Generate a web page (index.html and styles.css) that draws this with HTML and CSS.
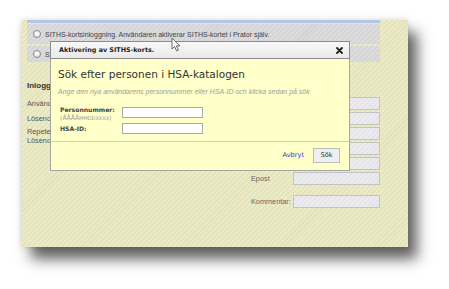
FILE: index.html
```html
<!DOCTYPE html>
<html lang="sv">
<head>
    <meta charset="UTF-8">
    <title>Aktivering av SITHS-korts</title>
    <link rel="stylesheet" href="styles.css">
</head>
<body>
  <div class="frame">
    <div class="shot">
        <div class="top-strip"></div>
        <div class="choice choice--first">
            <span class="radio"></span>
            <span>SITHS-kortsinloggning. Användaren aktiverar SITHS-kortet i Prator själv.</span>
        </div>
        <div class="choice choice--second">
            <span class="radio"></span>
            <span class="choice__cut">SITHS-kort med engångskod</span>
        </div>

        <h2 class="form-title">Inloggning</h2>
        <div class="form">
            <div class="form__left">
                <p class="form__label">Användarnamn</p>
                <p class="form__label">Lösenord</p>
                <p class="form__label form__label--two">Repetera<br>Lösenord</p>
            </div>
            <div class="form__right">
                <div class="field"><span class="field__label"></span><span class="field__input"></span></div>
                <div class="field"><span class="field__label"></span><span class="field__input"></span></div>
                <div class="field"><span class="field__label"></span><span class="field__input"></span></div>
                <div class="field"><span class="field__label"></span><span class="field__input"></span></div>
                <div class="field"><span class="field__label"></span><span class="field__input"></span></div>
                <div class="field"><span class="field__label">Epost</span><span class="field__input"></span></div>
                <div class="field field--gap"><span class="field__label">Kommentar:</span><span class="field__input"></span></div>
            </div>
        </div>

        <!-- dialogrutan ligger över formuläret -->
        <div class="dialog">
            <div class="dialog__bar">
                <span class="dialog__title">Aktivering av SITHS-korts.</span>
                <svg class="dialog__close" width="7" height="7" viewBox="0 0 7 7">
                    <path d="M1 1 L6 6 M6 1 L1 6" stroke="#222" stroke-width="1.8" stroke-linecap="round"/>
                </svg>
            </div>
            <div class="dialog__main">
                <h1 class="dialog__heading">Sök efter personen i HSA-katalogen</h1>
                <p class="dialog__hint">Ange den nya användarens personnummer eller HSA-ID och klicka sedan på sök</p>
                <div class="search">
                    <div class="search__label">Personnummer:<br><span class="search__format">(ÅÅÅÅ<small>MMDDXXXX</small>)</span></div>
                    <span class="search__input search__input--first"></span>
                    <div class="search__label search__label--single">HSA-ID:</div>
                    <span class="search__input"></span>
                </div>
            </div>
            <div class="dialog__foot">
                <a class="dialog__cancel">Avbryt</a>
                <button class="dialog__btn">Sök</button>
            </div>
        </div>

        <svg class="cursor" width="11" height="15" viewBox="0 0 11 15">
            <path d="M1 1 L1 12 L3.6 9.6 L5.6 13.8 L7.4 13 L5.4 8.9 L8.8 8.9 Z" fill="#fff" stroke="#555" stroke-width="0.9" stroke-linejoin="round"/>
        </svg>
    </div>
  </div>
</body>
</html>
```

FILE: styles.css
```css
body {
    margin: 0;
    padding: 20px 0 0 22px;
    min-height: 289px;
    box-sizing: border-box;
    overflow: hidden;
    background: #ffffff;
    font-family: "Liberation Sans", Arial, sans-serif;
}
.frame {
    width: 386px;
    height: 227px;
    box-shadow: 9px 12px 13px rgba(30, 30, 30, 0.7), -1px 0 6px rgba(0, 0, 0, 0.14);
}
.shot {
    position: relative;
    width: 386px;
    height: 227px;
    overflow: hidden;
    background-color: #ebeac5;
    background-image: repeating-linear-gradient(135deg, #ecebc7 0, #ecebc7 2px, #e3e2ba 2px, #e3e2ba 3.5px);
}
.top-strip {
    width: 353px;
    height: 3px;
    margin-left: 5px;
    background: #b3c6e2;
}
.choice {
    display: flex;
    align-items: center;
    gap: 4px;
    width: 353px;
    margin-left: 5px;
    padding-left: 6px;
    box-sizing: border-box;
    background-color: #dcdcdd;
    background-image: repeating-linear-gradient(135deg, #dcdcde 0, #dcdcde 2px, #d3d3d6 2px, #d3d3d6 3.5px);
    font-size: 7px;
    color: #444;
    white-space: nowrap;
}
.choice--first {
    height: 20px;
    margin-top: 1px;
}
.choice--second {
    height: 16px;
    margin-top: 2px;
}
.choice__cut {
    width: 7px;
    overflow: hidden;
}
.radio {
    flex: none;
    width: 6px;
    height: 6px;
    border: 1px solid #8a8a8a;
    border-radius: 50%;
    background: radial-gradient(circle at 40% 35%, #ffffff, #dedede);
}
.form-title {
    margin: 18px 0 0 5px;
    width: 23px;
    overflow: hidden;
    white-space: nowrap;
    font-size: 8px;
    line-height: 12px;
    color: #333;
}
.form {
    display: flex;
    margin: 5px 0 0 5px;
}
.form__left {
    width: 224px;
}
.form__label {
    width: 23px;
    overflow: hidden;
    white-space: nowrap;
    margin: 0 0 2px;
    font-size: 7.3px;
    line-height: 13px;
    color: #555;
}
.form__label--two {
    line-height: 9px;
}
.field {
    display: flex;
    align-items: center;
    margin-bottom: 2px;
}
.field--gap {
    margin-top: 10px;
}
.field__label {
    width: 42px;
    font-size: 7.3px;
    color: #666;
}
.field__input {
    width: 87px;
    height: 13px;
    box-sizing: border-box;
    border: 1px solid #c3c3c3;
    background-color: #ececf0;
    background-image: repeating-linear-gradient(135deg, #ececf0 0, #ececf0 2px, #e3e3e8 2px, #e3e3e8 3.5px);
}

/* dialog */
.dialog {
    position: absolute;
    left: 28px;
    top: 21px;
    width: 300px;
    height: 130px;
    box-sizing: border-box;
    border: 1px solid #a6a6a0;
    background: #ffffca;
    display: flex;
    flex-direction: column;
}
.dialog__bar {
    display: flex;
    align-items: center;
    justify-content: space-between;
    height: 16px;
    margin: -1px -1px 0;
    padding: 0 6px 0 8px;
    border: 1px solid #8c8c8c;
    background: linear-gradient(#f8f8f8, #e9e9e9);
}
.dialog__title {
    font-family: "DejaVu Sans", Verdana, sans-serif;
    font-weight: bold;
    font-size: 6.4px;
    color: #222;
}
.dialog__main {
    flex: 1;
    padding: 9px 0 0 7px;
}
.dialog__heading {
    margin: 0;
    font-family: "DejaVu Sans", Verdana, sans-serif;
    font-weight: normal;
    font-size: 10.5px;
    line-height: 13px;
    color: #333;
}
.dialog__hint {
    margin: 6px 0 0;
    font-style: italic;
    font-size: 7px;
    line-height: 9px;
    color: #a0a0a0;
}
.search {
    display: grid;
    grid-template-columns: 62px 81px;
    row-gap: 1px;
    margin-top: 10px;
    padding-left: 2px;
}
.search__label {
    font-family: "DejaVu Sans", Verdana, sans-serif;
    font-weight: bold;
    font-size: 6.1px;
    line-height: 8px;
    color: #444;
}
.search__label--single {
    line-height: 11px;
}
.search__format {
    font-weight: normal;
    color: #999;
}
.search__format small {
    font-size: 5px;
}
.search__input {
    height: 11px;
    box-sizing: border-box;
    border: 1px solid #a9a9a9;
    background: #ffffff;
}
.search__input--first {
    margin-top: 1px;
}
.dialog__foot {
    display: flex;
    align-items: center;
    justify-content: flex-end;
    gap: 9px;
    height: 29px;
    padding: 0 9px 2px 0;
    box-sizing: border-box;
    border-top: 1px solid #d0d0b8;
}
.dialog__cancel {
    font-family: "DejaVu Sans", Verdana, sans-serif;
    font-size: 6.6px;
    color: #3434c8;
}
.dialog__btn {
    width: 27px;
    height: 15px;
    padding: 0;
    border: 1px solid #bdbdbd;
    background: #efefef;
    font-family: "DejaVu Sans", Verdana, sans-serif;
    font-size: 6.6px;
    color: #333;
}
.cursor {
    position: absolute;
    left: 149px;
    top: 17px;
}
```
